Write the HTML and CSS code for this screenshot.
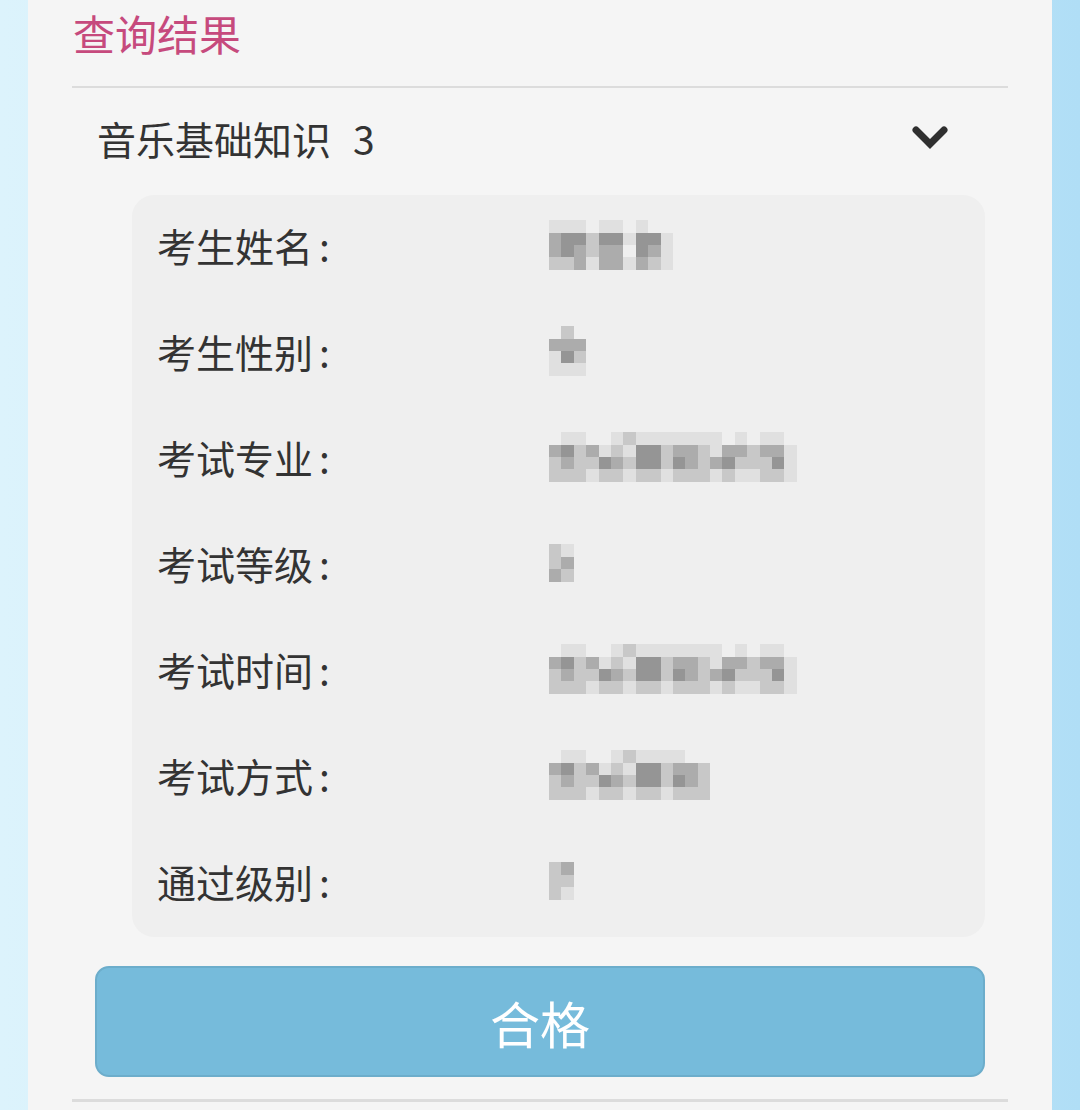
FILE: index.html
```html
<!DOCTYPE html>
<html lang="zh-CN">
<head>
    <meta charset="UTF-8">
    <meta name="viewport" content="width=device-width, initial-scale=1.0">
    <title>查询结果</title>
    <link rel="stylesheet" href="styles.css">
</head>
<body>
    <div class="card">
        <h2 class="title">查询结果</h2>
        <div class="acc-head">
            <span>音乐基础知识<span class="count">3</span></span>
            <svg class="chevron" width="36" height="24" viewBox="0 0 36 24">
                <polyline points="4,5 18,19 32,5" fill="none" stroke="#2f2f2f" stroke-width="7" stroke-linecap="round" stroke-linejoin="miter"/>
            </svg>
        </div>
        <div class="panel">
            <div class="row"><span class="label">考生姓名<i>:</i></span><span class="mosaic" data-cells="1110110100|3442441441|3432330431|2231331321"></span></div>
            <div class="row"><span class="label">考生性别<i>:</i></span><span class="mosaic" data-cells="020|333|142|111"></span></div>
            <div class="row"><span class="label">考试专业<i>:</i></span><span class="mosaic" data-cells="01100121111111010110|34231214423321332331|23224324424323422241|22212212212221211221"></span></div>
            <div class="row"><span class="label">考试等级<i>:</i></span><span class="mosaic" data-cells="21|23|32"></span></div>
            <div class="row"><span class="label">考试时间<i>:</i></span><span class="mosaic" data-cells="01100121111111010110|34231214423321332331|23224324424323422241|22212212212221211221"></span></div>
            <div class="row"><span class="label">考试方式<i>:</i></span><span class="mosaic" data-cells="0110012111100|3423121442332|2322432442432|2221221221222"></span></div>
            <div class="row"><span class="label">通过级别<i>:</i></span><span class="mosaic" data-cells="23|22|21"></span></div>
        </div>
        <div class="result">合格</div>
        <div class="bottom-line"></div>
    </div>
    <script>
        // masked values: each digit is one grey pixel block
        document.querySelectorAll('.mosaic').forEach(function(box) {
            box.dataset.cells.split('|').forEach(function(line) {
                const row = document.createElement('span');
                row.className = 'm-row';
                for (let i = 0; i < line.length; i++) {
                    const cell = document.createElement('span');
                    cell.className = 'm m' + line[i];
                    row.appendChild(cell);
                }
                box.appendChild(row);
            });
        });
    </script>
</body>
</html>
```

FILE: styles.css
```css
body {
    margin: 0;
    padding: 0;
    height: 1110px;
    overflow: hidden;
    background: linear-gradient(to right, #dcf3fc 0%, #cdeefb 50%, #b0def6 100%);
    font-family: "Noto Sans CJK SC", "Noto Sans", sans-serif;
}
.card {
    width: 1024px;
    height: 1110px;
    margin-left: 28px;
    padding: 0 44px;
    box-sizing: border-box;
    background-color: #f5f5f5;
}
.title {
    margin: 0;
    height: 86px;
    line-height: 66px;
    font-size: 42px;
    font-weight: normal;
    color: #c64a7d;
    padding-left: 1px;
    border-bottom: 2px solid #dcdcdc;
}
.acc-head {
    display: flex;
    align-items: center;
    justify-content: space-between;
    height: 107px;
    padding: 0 60px 0 25px;
    font-size: 39px;
    color: #333;
}
.acc-head > span {
    margin-top: -8px;
}
.count {
    margin-left: 22px;
}
.chevron {
    margin-top: -10px;
}
.panel {
    margin: 0 23px 0 60px;
    background-color: #efefef;
    border-radius: 22px;
    display: grid;
    grid-template-rows: repeat(7, 106px);
    padding-left: 25px;
}
.row {
    display: flex;
    align-items: center;
}
.label {
    width: 392px;
    font-size: 39px;
    color: #333;
    margin-top: -6px;
}
.label i {
    font-style: normal;
    margin-left: 6px;
}
.mosaic {
    display: flex;
    flex-direction: column;
    margin-top: -6px;
}
.m-row {
    display: flex;
}
.m {
    width: 12.4px;
    height: 12.4px;
}
.m0 { background-color: transparent; }
.m1 { background-color: #e0e0e0; }
.m2 { background-color: #c8c8c8; }
.m3 { background-color: #acacac; }
.m4 { background-color: #959595; }
.result {
    margin: 29px 23px 0 23px;
    height: 111px;
    box-sizing: border-box;
    border: 2px solid #6cadcb;
    border-radius: 14px;
    background-color: #76bbdb;
    color: #fff;
    font-size: 50px;
    display: flex;
    align-items: center;
    justify-content: center;
}
.bottom-line {
    margin-top: 22px;
    height: 3px;
    background-color: #dcdcdc;
}
```
